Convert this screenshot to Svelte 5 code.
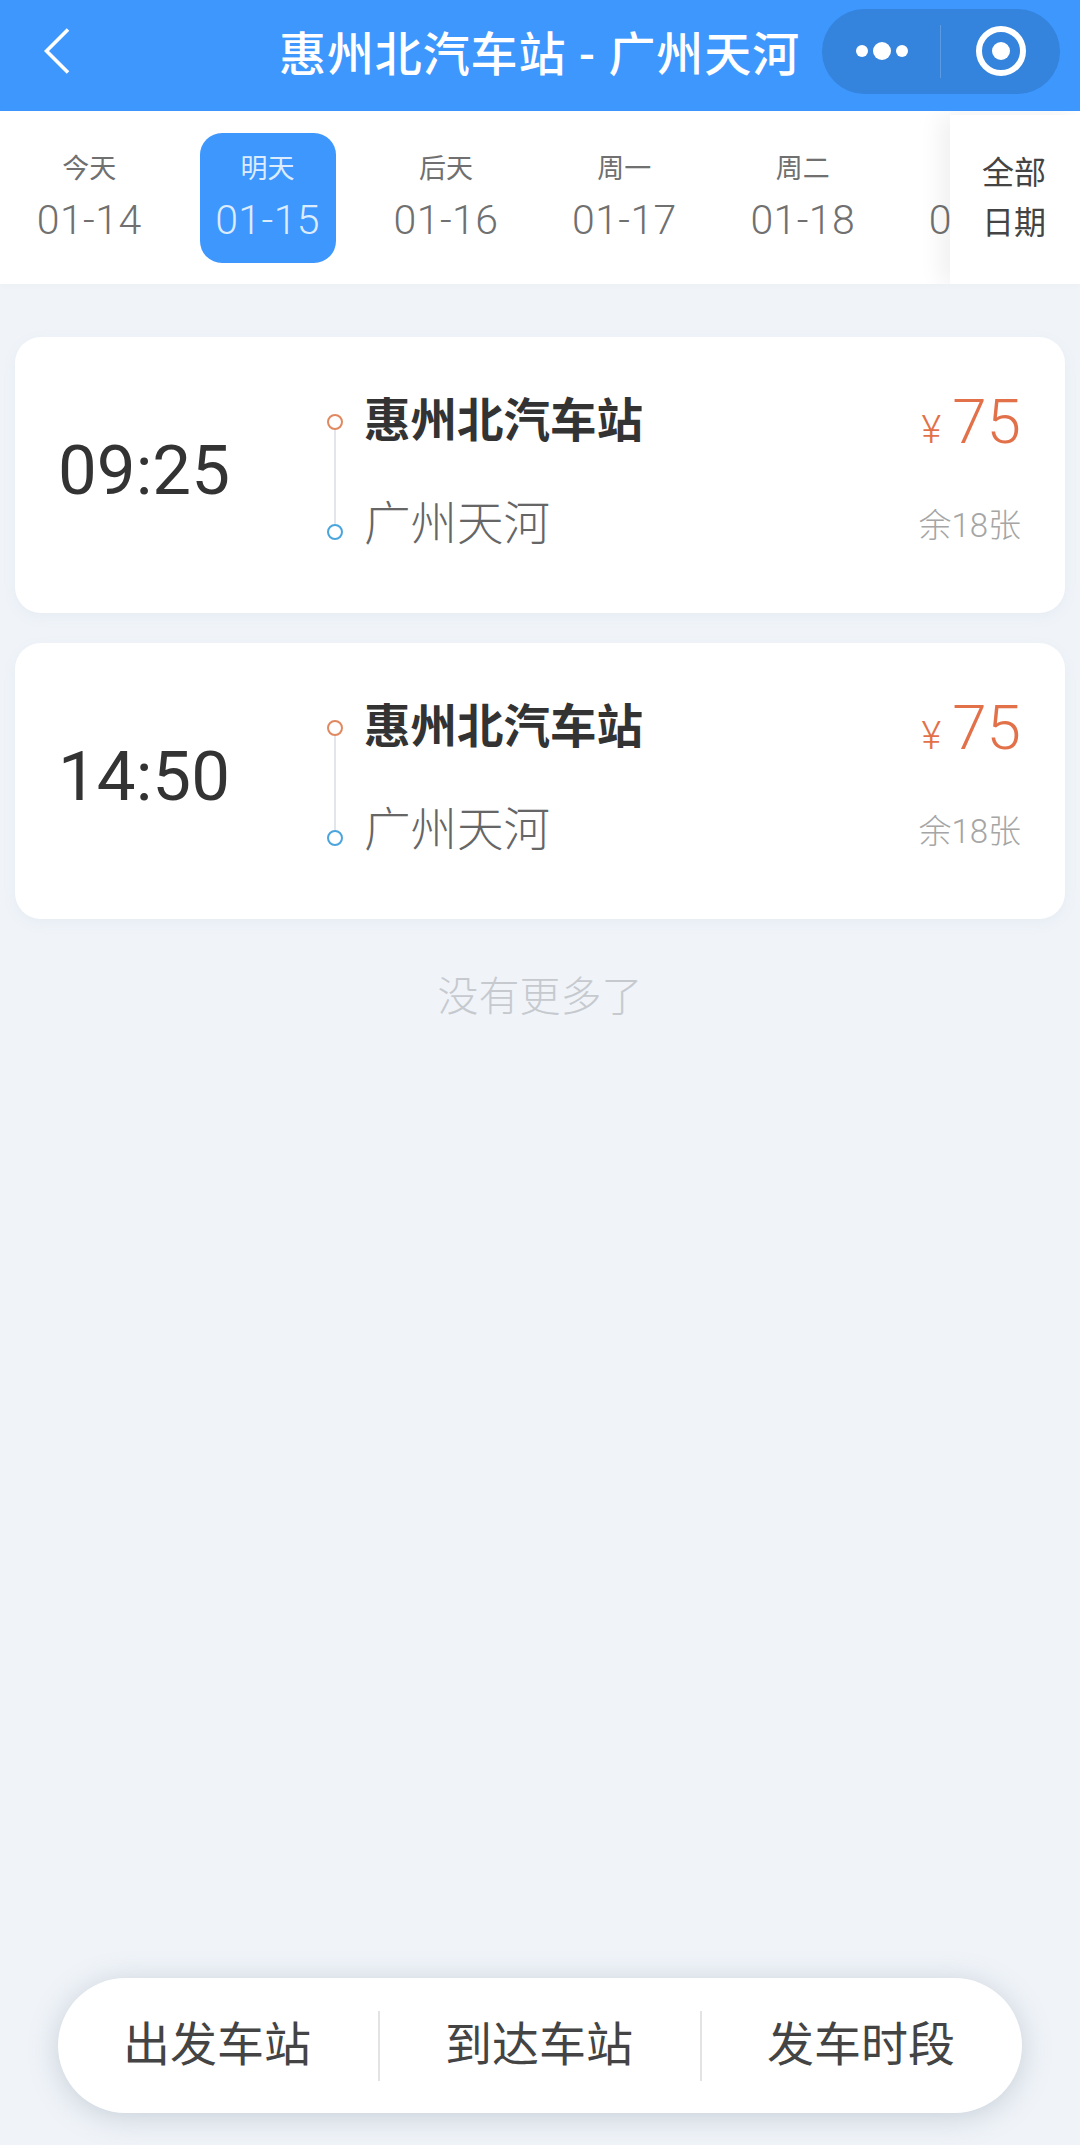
<script lang="ts">
	// Bus ticket list: date strip, trips, bottom filter pill.
	const days = [
		{ label: '今天', date: '01-14' },
		{ label: '明天', date: '01-15', active: true },
		{ label: '后天', date: '01-16' },
		{ label: '周一', date: '01-17' },
		{ label: '周二', date: '01-18' },
		{ label: '周三', date: '01-19' }
	];
	const trips = [
		{ time: '09:25', from: '惠州北汽车站', to: '广州天河', price: 75, left: '余18张' },
		{ time: '14:50', from: '惠州北汽车站', to: '广州天河', price: 75, left: '余18张' }
	];
	const filters = ['出发车站', '到达车站', '发车时段'];
</script>

<div class="page">
	<header class="nav">
		<svg class="back" width="26" height="46" viewBox="0 0 26 46" fill="none">
			<path d="M24 1.5 2.5 23 24 44.5" stroke="#fff" stroke-width="3.6" />
		</svg>
		<h1>惠州北汽车站 - 广州天河</h1>
		<div class="capsule">
			<svg width="60" height="20" viewBox="0 0 60 20" fill="#fff">
				<circle cx="9" cy="10" r="6" />
				<circle cx="29" cy="10" r="9" />
				<circle cx="49" cy="10" r="6" />
			</svg>
			<span class="sep"></span>
			<svg class="target" width="54" height="54" viewBox="0 0 54 54" fill="none">
				<circle cx="27" cy="27" r="22" stroke="#fff" stroke-width="6" />
				<circle cx="27" cy="27" r="9" fill="#fff" />
			</svg>
		</div>
	</header>

	<div class="strip">
		<div class="days">
			{#each days as d}
				<div class="day">
					<div class="day-box" class:active={d.active}>
						<span class="lbl">{d.label}</span>
						<span class="date">{d.date}</span>
					</div>
				</div>
			{/each}
		</div>
		<div class="all"><span>全部</span><span>日期</span></div>
	</div>

	<main class="list">
		{#each trips as t}
			<div class="card">
				<div class="time">{t.time}</div>
				<div class="rail">
					<i class="dot from"></i>
					<b class="line"></b>
					<i class="dot to"></i>
				</div>
				<div class="stops">
					<div class="from-name">{t.from}</div>
					<div class="to-name">{t.to}</div>
				</div>
				<div class="side">
					<div class="price"><small>¥</small>{t.price}</div>
					<div class="left">{t.left}</div>
				</div>
			</div>
		{/each}
		<div class="nomore">没有更多了</div>
	</main>

	<nav class="filters">
		{#each filters as f}
			<div class="filter">{f}</div>
		{/each}
	</nav>
</div>

<style>
	:global(body) { margin: 0; background: #f0f4f9; }
	.page {
		height: 2145px; width: 1080px; display: flex; flex-direction: column; overflow: hidden;
		background: #f0f4f9; color: #333;
		font-family: Roboto, "Noto Sans CJK SC", sans-serif;
	}
	.nav {
		height: 111px; flex: 0 0 auto; background: #3e97fd; display: flex; align-items: center;
		padding: 0 20px 0 44px; box-sizing: border-box;
	}
	.back { flex: 0 0 auto; margin-top: -9px; }
	h1 {
		margin: -3px 0 0 209px; font-size: 47px; font-weight: 500; color: #fff; white-space: nowrap;
		line-height: 1; letter-spacing: 0.9px; width: 542px; flex: 0 0 auto;
	}
	.capsule {
		margin-left: auto; width: 238px; height: 85px; border-radius: 43px; background: #3483dd;
		display: flex; align-items: center; flex: 0 0 auto; box-sizing: border-box; padding-left: 31px;
		margin-top: -9px;
	}
	.sep { width: 1px; height: 53px; background: #5a9be4; margin: 0 35px 0 27px; }
	.target { margin-left: -2px; }

	.strip {
		height: 173px; flex: 0 0 auto; background: #fff; display: flex; overflow: hidden;
		box-shadow: 0 2px 6px rgba(0, 0, 0, 0.02);
	}
	.days { display: flex; width: 950px; flex: 0 0 auto; overflow: hidden; }
	.day {
		width: 178.4px; flex: 0 0 auto; display: flex; justify-content: center; padding-top: 22px;
		box-sizing: border-box;
	}
	.day-box {
		width: 136px; height: 130px; border-radius: 22px; display: flex; flex-direction: column;
		align-items: center; color: #707070; box-sizing: border-box; padding-top: 18px;
	}
	.day-box.active { background: #3e97fd; color: #dcecff; }
	.lbl { font-size: 27px; line-height: 36px; font-weight: 400; }
	.date { font-size: 41px; line-height: 52px; margin-top: 7px; font-weight: 300; letter-spacing: 0.4px; white-space: nowrap; }
	.all {
		width: 130px; flex: 0 0 auto; background: #fff; display: flex; flex-direction: column;
		align-items: center; color: #444; font-size: 32px; line-height: 50px; padding-top: 33px; box-sizing: border-box;
		box-shadow: -10px 0 22px rgba(0, 0, 0, 0.06); position: relative; margin-top: 4px;
		padding-right: 2px;
	}

	.list { padding: 53px 15px 0; display: flex; flex-direction: column; gap: 30px; }
	.card {
		height: 276px; background: #fff; border-radius: 26px; display: flex; align-items: center;
		box-shadow: 0 4px 14px rgba(120, 140, 170, 0.07); box-sizing: border-box;
	}
	.time { width: 258px; text-align: center; font-size: 69px; flex: 0 0 auto; color: #333; line-height: 1; margin-top: -10px; }
	.rail {
		margin-left: 54px; height: 126px; width: 16px; display: flex; flex-direction: column; align-items: center;
		flex: 0 0 auto; margin-top: 3px;
	}
	.dot { width: 16px; height: 16px; border-radius: 50%; box-sizing: border-box; border: 2.5px solid; flex: 0 0 auto; background: #fff; }
	.dot.from { border-color: #e0885f; }
	.dot.to { border-color: #4aa5dd; }
	.line { flex: 1; width: 2px; background: #e2e6ea; }
	.stops { margin-left: 21px; margin-top: -5px; flex: 1; }
	.from-name { font-size: 46.5px; line-height: 60px; font-weight: 700; color: #333; }
	.to-name { font-size: 46.5px; line-height: 60px; margin-top: 43px; font-weight: 300; color: #666; }
	.side { text-align: right; padding-right: 44px; margin-top: -3px; }
	.price { font-size: 62px; line-height: 60px; color: #e2714a; white-space: nowrap; font-weight: 300; }
	.price small { font-size: 38px; margin-right: 11px; }
	.left { font-size: 33px; line-height: 60px; margin-top: 36px; color: #a5a5a5; font-weight: 300; white-space: nowrap; }
	.nomore { text-align: center; font-size: 41px; color: #c6cacf; line-height: 56px; margin-top: 20px; font-weight: 300; }

	.filters {
		margin: auto 58px 32px; height: 135px; border-radius: 68px; background: #fff; display: flex; align-items: center;
		box-shadow: 0 4px 30px rgba(90, 110, 130, 0.28); flex: 0 0 auto;
	}
	.filter {
		flex: 1; height: 70px; display: flex; align-items: center; justify-content: center; box-sizing: border-box;
		font-size: 47px; color: #444; font-weight: 400; border-left: 2px solid #e3e3e3; padding: 0 2px 10px 0;
	}
	.filter:first-child { border-left: 0; }
</style>
